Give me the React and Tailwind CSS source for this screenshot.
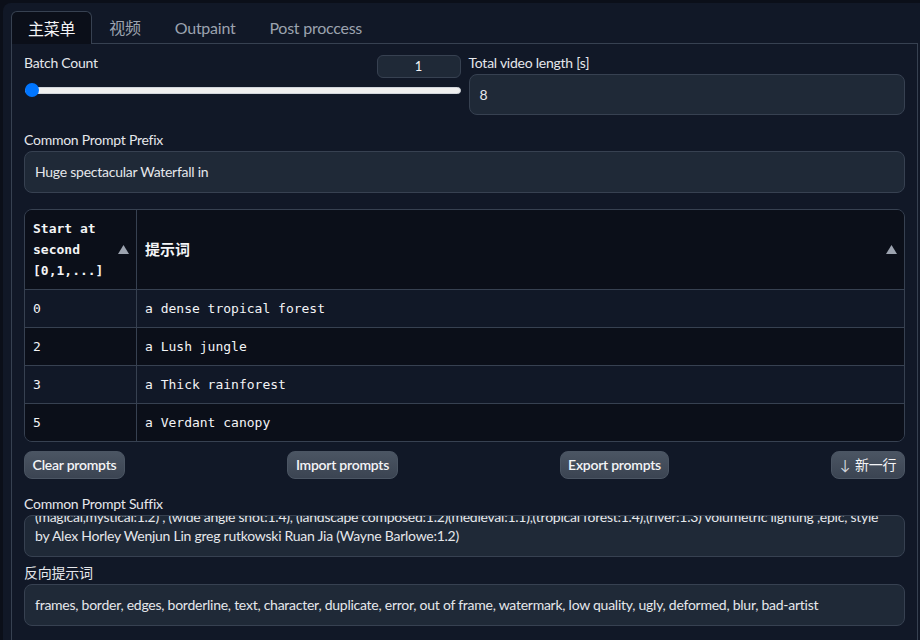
export default function App() {
  const rows = [
    ["0", "a dense tropical forest", "bg-[#111827]"],
    ["2", "a Lush jungle", "bg-[#0b0f19]"],
    ["3", "a Thick rainforest", "bg-[#111827]"],
    ["5", "a Verdant canopy", "bg-[#0b0f19]"],
  ];
  const Tri = () => (
    <svg width="11" height="9" viewBox="0 0 11 9" className="shrink-0">
      <polygon points="5.5,0 11,9 0,9" fill="#9ca3af" />
    </svg>
  );
  return (
    <div className="h-[640px] overflow-hidden bg-[#0b0f19] pl-[3px] pt-[3px] font-['Lato','Noto_Sans_CJK_SC',sans-serif] tracking-[-0.25px] text-[#e5e7eb]">
      <div className="h-full w-[940px] rounded-tl-lg bg-[#111827] pl-2 pt-2">
        {/* tabs */}
        <div className="flex h-[32px] text-[16px]">
          <div className="relative z-10 -mb-px flex h-[33px] items-center rounded-t-md border border-b-0 border-[#374151] bg-[#0b0f19] px-4 pt-[2px] text-[#f3f4f6]">
            主菜单
          </div>
          <div className="flex h-[32px] items-center border border-transparent px-4 pt-[2px] text-[#9ca3af]">视频</div>
          <div className="flex h-[32px] items-center border border-transparent px-4 pt-[2px] text-[#9ca3af]">Outpaint</div>
          <div className="flex h-[32px] items-center border border-transparent px-4 pt-[2px] text-[#9ca3af]">Post proccess</div>
        </div>
        {/* panel */}
        <div className="h-[700px] w-[907px] border border-[#374151] px-3 pt-[9px]">
          {/* row 1 */}
          <div className="grid grid-cols-2 gap-2">
            <div>
              <div className="flex items-start justify-between">
                <span className="h-[20px] text-[14px] leading-[20px]">Batch Count</span>
                <div className="mt-[2px] flex h-[23px] w-[84px] items-center justify-center rounded-md border border-[#374151] bg-[#1f2937] text-[13px] text-[#f3f4f6]">
                  1
                </div>
              </div>
              <div className="relative mt-[5px] flex h-[14px] items-center">
                <div className="ml-px h-[7px] w-full rounded-full border border-[#d1d5db] bg-[#efefef]" />
                <div className="absolute left-px top-0 h-[14px] w-[14px] rounded-full bg-[#0075ff]" />
              </div>
            </div>
            <div>
              <div className="h-[20px] text-[14px] leading-[20px]">Total video length [s]</div>
              <div className="mt-px flex h-[41px] items-center rounded-lg border border-[#374151] bg-[#1f2937] px-[10px] pb-px text-[14px]">
                8
              </div>
            </div>
          </div>
          {/* prefix */}
          <div className="mt-[15px] h-[20px] text-[14px] leading-[20px]">Common Prompt Prefix</div>
          <div className="mt-px flex h-[42px] items-center rounded-lg border border-[#374151] bg-[#1f2937] px-[10px] pb-px text-[14px]">
            Huge spectacular Waterfall in
          </div>
          {/* table */}
          <div className="mt-[16px] overflow-hidden rounded-lg border border-[#374151] font-['DejaVu_Sans_Mono',monospace] text-[13px] tracking-normal text-[#f3f4f6]">
            <div className="flex h-[79px] bg-[#0b0f19]">
              <div className="flex w-[112px] items-center justify-between border-r border-[#374151] pl-2 pr-[7px] font-bold leading-[21px]">
                <div>
                  Start at
                  <br />
                  second
                  <br />
                  [0,1,...]
                </div>
                <Tri />
              </div>
              <div className="flex flex-1 items-center justify-between pl-2 pr-[7px]">
                <span className="font-['Noto_Sans_CJK_SC',sans-serif] text-[15px] font-bold">提示词</span>
                <Tri />
              </div>
            </div>
            {rows.map(([a, b, bg]) => (
              <div key={a} className={`flex h-[38px] border-t border-[#374151] ${bg}`}>
                <div className="flex w-[112px] items-center border-r border-[#374151] pl-2">{a}</div>
                <div className="flex flex-1 items-center pl-2">{b}</div>
              </div>
            ))}
          </div>
          {/* buttons */}
          <div className="mt-[9px] flex justify-between text-[14px] font-semibold text-[#f3f4f6]">
            <button className="flex h-[28px] w-[101px] items-center justify-center rounded-lg border border-[#4b5563] bg-gradient-to-b from-[#4b5563] to-[#3b4452] pb-[2px]">
              Clear prompts
            </button>
            <button className="flex h-[28px] w-[111px] items-center justify-center rounded-lg border border-[#4b5563] bg-gradient-to-b from-[#4b5563] to-[#3b4452] pb-[2px]">
              Import prompts
            </button>
            <button className="flex h-[28px] w-[109px] items-center justify-center rounded-lg border border-[#4b5563] bg-gradient-to-b from-[#4b5563] to-[#3b4452] pb-[2px]">
              Export prompts
            </button>
            <button className="flex h-[28px] w-[74px] items-center justify-center gap-[5px] rounded-lg border border-[#4b5563] bg-gradient-to-b from-[#4b5563] to-[#3b4452] pb-[2px] font-normal">
              <span className="text-[#d1d5db]">↓</span>
              <span>新一行</span>
            </button>
          </div>
          {/* suffix */}
          <div className="mt-[15px] h-[20px] text-[14px] leading-[20px]">Common Prompt Suffix</div>
          <div className="mt-px h-[42px] overflow-hidden rounded-lg border border-[#374151] bg-[#1f2937] px-[10px] text-[14px] leading-[19px]">
            <div className="-mt-[9px] overflow-hidden whitespace-nowrap">
              (magical,mystical:1.2) , (wide angle shot:1.4), (landscape composed:1.2)(medieval:1.1),(tropical forest:1.4),(river:1.3) volumetric lighting ,epic, style
            </div>
            <div className="overflow-hidden whitespace-nowrap">
              by Alex Horley Wenjun Lin greg rutkowski Ruan Jia (Wayne Barlowe:1.2)
            </div>
          </div>
          {/* negative */}
          <div className="mt-[6px] h-[20px] text-[14px] leading-[20px]">反向提示词</div>
          <div className="mt-px flex h-[42px] items-center overflow-hidden whitespace-nowrap rounded-lg border border-[#374151] bg-[#1f2937] px-[10px] pb-px text-[14px]">
            frames, border, edges, borderline, text, character, duplicate, error, out of frame, watermark, low quality, ugly, deformed, blur, bad-artist
          </div>
        </div>
      </div>
    </div>
  );
}
